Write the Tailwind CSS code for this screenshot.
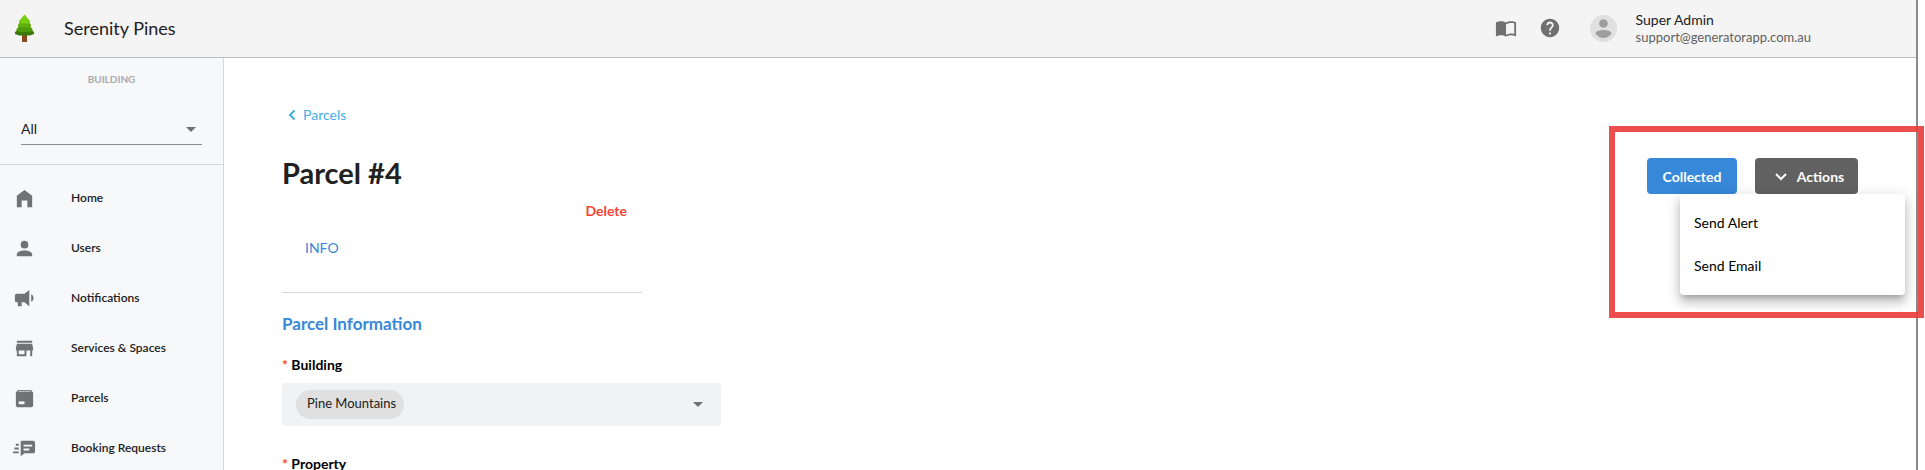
<!DOCTYPE html>
<html lang="en">
<head>
  <meta charset="UTF-8">
  <meta name="viewport" content="width=device-width, initial-scale=1.0">
  <title>Serenity Pines - Parcel #4</title>
  <script src="https://cdn.jsdelivr.net/npm/@tailwindcss/browser@4"></script>
</head>
<body class="bg-white font-[Lato,sans-serif] text-[#212121] overflow-hidden">
  <div class="relative flex flex-col min-h-screen mr-[7px] border-r-2 border-[#8a8a8a]">

    <!-- Top bar -->
    <header class="flex items-center h-[58px] pb-px bg-[#f4f4f4] border-b border-[#bdbdbd]">
      <svg class="w-5 h-7 ml-[15px]" viewBox="0 0 20 28">
        <path d="M7 20h5v8H7z" fill="#8a4b1c"/>
        <path d="M9.500 11L19 18v2l-4 1.500H4L0 20v-2z" fill="#3c7a05"/>
        <path d="M9.500 7L17.500 15v2l-4 1H5.500l-4-1v-2z" fill="#4e9a0a"/>
        <path d="M9.500 4L16 10.500v2l-3 1H6l-3-1v-2z" fill="#5fae0c"/>
        <path d="M9.500 0.500L15 7v1.500l-2 1H6l-2-1V7z" fill="#77cf10"/>
      </svg>
      <span class="ml-[29px] text-lg">Serenity Pines</span>
      <div class="ml-auto flex items-center mr-[105px]">
        <a href="#" aria-label="Guide" class="mr-[22px]">
          <svg class="size-[22px]" viewBox="0 0 24 24" fill="#707070"><path d="M21 5c-1.110-.35-2.330-.5-3.500-.5-1.950 0-4.050.4-5.500 1.500-1.450-1.100-3.550-1.500-5.500-1.500S2.450 4.900 1 6v14.650c0 .25.25.5.5.5.1 0 .15-.05.25-.05C3.100 20.450 5.050 20 6.500 20c1.950 0 4.050.4 5.500 1.500 1.350-.85 3.800-1.500 5.500-1.500 1.650 0 3.350.3 4.750 1.050.1.05.15.05.25.05.25 0 .5-.25.5-.5V6c-.6-.45-1.250-.75-2-1zm0 13.500c-1.100-.35-2.300-.5-3.500-.5-1.700 0-4.150.65-5.500 1.500V8c1.350-.85 3.800-1.500 5.500-1.500 1.200 0 2.400.15 3.500.5v11.500z"/></svg>
        </a>
        <a href="#" aria-label="Help" class="mr-[29px]">
          <svg class="size-[22px]" viewBox="0 0 24 24" fill="#707070"><path d="M12 2C6.480 2 2 6.480 2 12s4.480 10 10 10 10-4.480 10-10S17.520 2 12 2zm1 17h-2v-2h2v2zm2.070-7.750l-.9.920C13.450 12.900 13 13.500 13 15h-2v-.5c0-1.100.45-2.100 1.170-2.830l1.240-1.260c.37-.36.59-.86.59-1.410 0-1.100-.9-2-2-2s-2 .9-2 2H8c0-2.210 1.790-4 4-4s4 1.790 4 4c0 .88-.36 1.680-.93 2.250z"/></svg>
        </a>
        <svg class="size-[27px] mr-[19px]" viewBox="0 0 27 27">
          <circle cx="13.500" cy="13.500" r="13.500" fill="#e0e0e0"/>
          <circle cx="13.500" cy="8.500" r="4.300" fill="#9e9e9e"/>
          <path d="M5.500 18.500c0-2.400 5-3.500 8-3.500s8 1.100 8 3.500c-1.700 2.700-4.600 4.500-8 4.500s-6.300-1.800-8-4.500z" fill="#9e9e9e"/>
        </svg>
        <div>
          <div class="text-sm leading-[18px]">Super Admin</div>
          <div class="text-[13px] leading-[16px] text-[#616161]">support@generatorapp.com.au</div>
        </div>
      </div>
    </header>

    <div class="flex flex-1">
      <!-- Side navigation -->
      <aside class="w-[224px] shrink-0 bg-[#f6f8fa] border-r border-[#d5d7d9]">
        <div class="h-[107px] pt-3 px-[21px] border-b border-[#d5d7d9]">
          <label for="building-filter" class="block text-center text-[10px] leading-[18px] font-bold text-[#a9abad]">BUILDING</label>
          <div class="mt-[26px] flex items-center h-[31px] border-b border-[#8a8c8e]">
            <select id="building-filter" class="flex-1 appearance-none bg-transparent text-sm outline-none">
              <option>All</option>
            </select>
            <svg class="w-[10px] h-[5px] mr-[6px]" viewBox="0 0 10 5" fill="#707070"><path d="M0 0h10L5 5z"/></svg>
          </div>
        </div>
        <nav class="pt-2 text-xs font-semibold">
          <a href="#" class="flex items-center h-[50px] pl-[13px] gap-[35px]">
            <svg class="size-[23px]" viewBox="0 0 24 24" fill="#707375"><path d="M12 3l8 6v12h-5v-7H9v7H4V9z"/></svg>Home
          </a>
          <a href="#" class="flex items-center h-[50px] pl-[13px] gap-[35px]">
            <svg class="size-[23px]" viewBox="0 0 24 24" fill="#707375"><path d="M12 4a4 4 0 0 1 0 8 4 4 0 0 1 0-8m0 10c4.420 0 8 1.790 8 4v2H4v-2c0-2.210 3.580-4 8-4z"/></svg>Users
          </a>
          <a href="#" class="flex items-center h-[50px] pl-[13px] gap-[35px]">
            <svg class="size-[23px]" viewBox="0 0 24 24" fill="#707375"><path d="M12 7H4a2 2 0 0 0-2 2v5a2 2 0 0 0 2 2h1v4h4v-4h3l5 4V3l-5 4m9.500 4.500c0 1.710-.96 3.260-2.500 4v-8c1.530.75 2.500 2.300 2.500 4z"/></svg>Notifications
          </a>
          <a href="#" class="flex items-center h-[50px] pl-[13px] gap-[35px]">
            <svg class="size-[23px]" viewBox="0 0 24 24" fill="#707375"><path d="M12 18H6v-4h6m9 0v-2l-1-5H4l-1 5v2h1v6h10v-6h4v6h2v-6m0-10H4v2h16V4z"/></svg>Services &amp; Spaces
          </a>
          <a href="#" class="flex items-center h-[50px] pl-[13px] gap-[35px]">
            <svg class="size-[23px]" viewBox="0 0 24 24" fill="#707375"><path d="M5 3h14l2 3v13a2 2 0 0 1-2 2H5a2 2 0 0 1-2-2V6z"/><path d="M5.500 4h13v1h-13z" fill="#c9cbcd"/><path d="M6 15h6v3H6z" fill="#f6f8fa"/></svg>Parcels
          </a>
          <a href="#" class="flex items-center h-[50px] pl-[13px] gap-[35px]">
            <svg class="size-[23px]" viewBox="0 0 24 24" fill="#707375"><path d="M9 4h12a2 2 0 0 1 2 2v9a2 2 0 0 1-2 2h-9l-4 3V5a1 1 0 0 1 1-1z"/><path d="M11 8h9v2h-9zM11 12h6v2h-6z" fill="#f6f8fa"/><path d="M3 7h3v2H3zM1.500 11H6v2H1.500zM0 15h6v2H0z"/></svg>Booking Requests
          </a>
        </nav>
      </aside>

      <!-- Parcel detail -->
      <main class="flex-1 flex items-start justify-between px-[58px]">
        <div class="w-[439px] pt-[47px]">
          <a href="#" class="flex items-center gap-[7px] pl-[6px] text-sm text-[#41b0e8]">
            <svg class="w-2 h-3" viewBox="0 0 8 12" fill="none" stroke="#41b0e8" stroke-width="2"><path d="M6.500 1.500L2 6l4.500 4.500"/></svg>Parcels
          </a>
          <h1 class="mt-[30px] text-[29px] leading-[36px] font-bold">Parcel #4</h1>
          <div class="w-[360px] border-b border-[#dcdcdc] pb-[34px]">
            <div class="flex justify-end pr-[15px] mt-[10px]">
              <button type="button" class="text-sm font-bold text-[#f44336]">Delete</button>
            </div>
            <a href="#" class="block mt-[17px] pl-[23px] text-sm text-[#3788d8]">INFO</a>
          </div>
          <h2 class="mt-[19px] text-[17px] leading-[24px] font-bold text-[#3788d8]">Parcel Information</h2>
          <label for="parcel-building" class="block mt-[19px] text-sm font-bold text-black"><span class="text-[#f44336]">*</span> Building</label>
          <div class="mt-2 flex items-center justify-between h-[43px] rounded bg-[#f1f2f4] pl-[14px] pr-[18px]">
            <select id="parcel-building" class="appearance-none h-[29px] w-[108px] pl-[11px] pb-px rounded-full bg-[#e0e0e0] text-[13px] outline-none">
              <option>Pine Mountains</option>
            </select>
            <svg class="w-[10px] h-[5px]" viewBox="0 0 10 5" fill="#707070"><path d="M0 0h10L5 5z"/></svg>
          </div>
          <div class="mt-7 text-sm font-bold text-black"><span class="text-[#f44336]">*</span> Property</div>
        </div>

        <div class="relative flex gap-[18px] mt-[100px]">
          <button type="button" class="h-9 w-[90px] pt-[2px] rounded-sm bg-[#3788d8] text-sm font-bold text-white">Collected</button>
          <button type="button" class="flex items-center justify-center gap-[10px] h-9 w-[103px] pl-[6px] pt-[2px] rounded-sm bg-[#616161] text-sm font-bold text-white">
            <svg class="w-3 h-2" viewBox="0 0 12 8" fill="none" stroke="#fff" stroke-width="2"><path d="M1 1L6 6l5-5"/></svg>Actions
          </button>
          <!-- Open actions menu -->
          <div class="absolute top-9 left-[33px] w-[225px] pt-[7px] pb-2 flex flex-col rounded-sm bg-white shadow-[0_5px_5px_-3px_rgba(0,0,0,.2),0_8px_10px_1px_rgba(0,0,0,.14),0_3px_14px_2px_rgba(0,0,0,.12)]">
            <button type="button" class="h-[43px] pl-[14px] text-left text-sm text-black">Send Alert</button>
            <button type="button" class="h-[43px] pl-[14px] text-left text-sm text-black">Send Email</button>
          </div>
        </div>
      </main>
    </div>

    <!-- Highlight around the actions -->
    <div class="absolute top-[126px] right-[-8px] w-[315px] h-[192px] border-6 border-[#ea3a3a]/90 pointer-events-none"></div>
  </div>
</body>
</html>
